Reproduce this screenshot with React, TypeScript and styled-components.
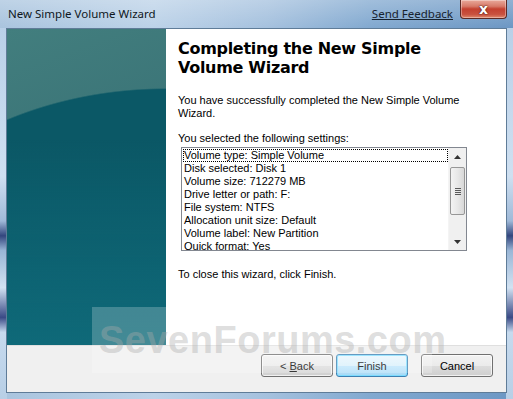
import React from 'react'
import styled, { createGlobalStyle } from 'styled-components'

const GlobalStyle = createGlobalStyle`
  html, body {
    margin: 0;
    padding: 0;
    overflow: hidden;
    background: #ffffff;
  }
`

//window frame

const Window = styled.div`
  position: relative;
  width: 513px;
  height: 399px;
  box-sizing: border-box;
  padding: 0 6px 6px 6px;
  display: flex;
  flex-direction: column;
  background:
    linear-gradient(180deg, rgba(255,255,255,0.25) 0px, rgba(255,255,255,0) 28px),
    linear-gradient(90deg, #a9c4de 0%, #bcd2e8 30%, #a5c1de 52%, #82a9d0 72%, #6c97c4 100%);
  overflow: hidden;
`

const SideGlass = styled.div<{ $side: 'left' | 'right' }>`
  position: absolute;
  top: 28px;
  bottom: 0;
  ${p => p.$side === 'left' ? 'left: 0;' : 'right: 0;'}
  width: 7px;
  background: linear-gradient(180deg,
    #b9d0e8 0%, #cfe0f1 40%, #9fb9d8 52%, #33467e 56%, #9ab6d6 60%,
    #d2e2f2 70%, #3a4a86 78%, #c6daee 82%, #b8cfe6 100%);
`

const TitleBar = styled.div`
  position: relative;
  height: 28px;
  display: flex;
  align-items: center;
  padding-left: 2px;
`

const Title = styled.div`
  flex: 1;
  font-family: "Noto Sans", "Open Sans", sans-serif;
  font-size: 11.5px;
  color: #0f1722;
  margin-top: -1px;
`

const Feedback = styled.a`
  font-family: "Noto Sans", "Open Sans", sans-serif;
  font-size: 11.5px;
  color: #17222e;
  text-decoration: underline;
  margin-right: 7px;
  margin-top: -1px;
`

const CloseBtn = styled.div`
  align-self: flex-start;
  width: 47px;
  height: 19px;
  box-sizing: border-box;
  border: 1px solid #5c2a25;
  border-top: none;
  border-radius: 0 0 4px 4px;
  background: linear-gradient(180deg, #e9a99b 0%, #d77a69 35%, #c4402f 50%, #c9523f 80%, #e08a6d 100%);
  box-shadow: inset 0 0 0 1px rgba(255,255,255,0.35);
  display: flex;
  align-items: center;
  justify-content: center;
  color: #ffffff;
  font-family: "DejaVu Sans", sans-serif;
  font-weight: bold;
  font-size: 14px;
  line-height: 1;
  text-shadow: 0 0 2px #4a1a14, 0 0 1px #4a1a14;
`

const Client = styled.div`
  position: relative;
  flex: 1;
  display: flex;
  flex-direction: column;
  border: 1px solid #5f7c98;
  background: #f0f0f0;
`

const Main = styled.div`
  height: 316px;
  display: flex;
`

//left banner

const Banner = styled.div`
  width: 159px;
  background:
    radial-gradient(ellipse 330px 250px at 159px 309px, #0b5866 0%, #0b5866 99.4%, transparent 100%),
    linear-gradient(160deg, #427e7e 0%, #376f74 60%, #2d6b72 100%);
  position: relative;
  &::after {
    content: '';
    position: absolute;
    inset: 0;
    background: linear-gradient(180deg, rgba(16,110,126,0) 35%, rgba(16,110,126,0.8) 100%);
    -webkit-mask: radial-gradient(ellipse 330px 250px at 159px 309px, #000 99.4%, transparent 100%);
    mask: radial-gradient(ellipse 330px 250px at 159px 309px, #000 99.4%, transparent 100%);
  }
`

//right pane

const Pane = styled.div`
  flex: 1;
  background: #ffffff;
  padding: 10px 0 0 12px;
  font-family: "Liberation Sans", Arial, sans-serif;
  font-size: 11px;
  line-height: 13px;
  color: #000000;
`

const Heading = styled.h1`
  margin: 0 0 17px 0;
  font-family: "DejaVu Sans", Verdana, sans-serif;
  font-weight: bold;
  font-size: 16px;
  letter-spacing: -0.3px;
  line-height: 19px;
  color: #000000;
  width: 300px;
`

const Para = styled.p<{ $gap: number }>`
  margin: 0 0 ${p => p.$gap}px 0;
  width: 300px;
`

const ListBox = styled.div`
  width: 286px;
  height: 104px;
  box-sizing: border-box;
  margin-left: 3px;
  margin-bottom: 17px;
  border: 1px solid #828790;
  display: flex;
  background: #ffffff;
`

const Items = styled.div`
  flex: 1;
  overflow: hidden;
  padding: 1px 0 0 1px;
`

const Item = styled.div<{ $focus?: boolean }>`
  height: 13px;
  padding-left: 1px;
  white-space: nowrap;
  outline: ${p => p.$focus ? '1px dotted #000' : 'none'};
  outline-offset: -1px;
`

const ScrollBar = styled.div`
  width: 17px;
  display: flex;
  flex-direction: column;
  background: #f0f0f0;
  border-left: 1px solid #f4f4f4;
`

const Arrow = styled.div`
  height: 17px;
  display: flex;
  align-items: center;
  justify-content: center;
`

const Track = styled.div`
  flex: 1;
  padding: 2px 1px 0 1px;
`

const Thumb = styled.div`
  height: 48px;
  box-sizing: border-box;
  border: 1px solid #979797;
  border-radius: 2px;
  background: linear-gradient(90deg, #f3f3f3 0%, #e8e8e8 50%, #d8d8d8 100%);
  display: flex;
  flex-direction: column;
  align-items: center;
  justify-content: center;
  gap: 1px;
  & > span {
    width: 6px;
    height: 1px;
    background: #5a5a5a;
  }
`

//footer

const Footer = styled.div`
  flex: 1;
  border-top: 1px solid #dfdfdf;
  display: flex;
  justify-content: flex-end;
  align-items: flex-start;
  padding: 8px 13px 0 0;
`

const Button = styled.div<{ $primary?: boolean; $gap: number }>`
  width: 72px;
  height: 23px;
  box-sizing: border-box;
  margin-left: ${p => p.$gap}px;
  border: 1px solid ${p => p.$primary ? '#3c7fb1' : '#707070'};
  border-radius: 3px;
  background: ${p => p.$primary
    ? 'linear-gradient(180deg, #eaf6fd 0%, #d9f0fc 50%, #bee6fd 51%, #a7d9f5 100%)'
    : 'linear-gradient(180deg, #f2f2f2 0%, #ebebeb 50%, #dddddd 51%, #cfcfcf 100%)'};
  box-shadow: inset 0 0 0 1px ${p => p.$primary ? 'rgba(120,220,255,0.9)' : 'rgba(255,255,255,0.7)'};
  display: flex;
  align-items: center;
  justify-content: center;
  white-space: pre;
  font-family: "Liberation Sans", Arial, sans-serif;
  font-size: 11px;
  color: #000000;
  & u { text-decoration: underline; }
`

//watermark

const Watermark = styled.div`
  position: absolute;
  left: 92px;
  top: 307px;
  width: 340px;
  height: 66px;
  background: rgba(255,255,255,0.22);
  font-family: "Liberation Sans", Arial, sans-serif;
  font-weight: bold;
  font-size: 38px;
  letter-spacing: 0.5px;
  line-height: 66px;
  padding-left: 7px;
  box-sizing: border-box;
  color: rgba(170,170,170,0.4);
  white-space: nowrap;
  pointer-events: none;
`

const settings = [
  'Volume type: Simple Volume',
  'Disk selected: Disk 1',
  'Volume size: 712279 MB',
  'Drive letter or path: F:',
  'File system: NTFS',
  'Allocation unit size: Default',
  'Volume label: New Partition',
  'Quick format: Yes',
]

const App: React.FC = () => {
  return (
    <>
      <GlobalStyle />
      <Window>
        <SideGlass $side="left" />
        <SideGlass $side="right" />
        <TitleBar>
          <Title>New Simple Volume Wizard</Title>
          <Feedback>Send Feedback</Feedback>
          <CloseBtn>x</CloseBtn>
        </TitleBar>
        <Client>
          <Main>
            <Banner />
            <Pane>
              <Heading>Completing the New Simple Volume Wizard</Heading>
              <Para $gap={12}>You have successfully completed the New Simple Volume Wizard.</Para>
              <Para $gap={2}>You selected the following settings:</Para>
              <ListBox>
                <Items>
                  {settings.map((s, i) => (
                    <Item key={s} $focus={i === 0}>{s}</Item>
                  ))}
                </Items>
                <ScrollBar>
                  <Arrow>
                    <svg width="7" height="4" viewBox="0 0 7 4"><path d="M0 4 L3.5 0 L7 4 Z" fill="#333" /></svg>
                  </Arrow>
                  <Track>
                    <Thumb><span /><span /><span /><span /></Thumb>
                  </Track>
                  <Arrow>
                    <svg width="7" height="4" viewBox="0 0 7 4"><path d="M0 0 L3.5 4 L7 0 Z" fill="#333" /></svg>
                  </Arrow>
                </ScrollBar>
              </ListBox>
              <Para $gap={0}>To close this wizard, click Finish.</Para>
            </Pane>
          </Main>
          <Footer>
            <Button $gap={0}>{'< '}<u>B</u>ack</Button>
            <Button $gap={3} $primary>Finish</Button>
            <Button $gap={13}>Cancel</Button>
          </Footer>
        </Client>
        <Watermark>SevenForums.com</Watermark>
      </Window>
    </>
  )
}

export default App
